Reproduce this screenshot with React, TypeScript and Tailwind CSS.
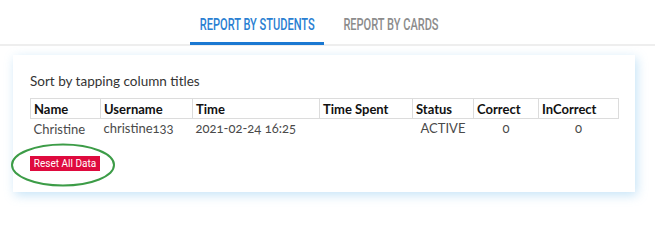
import React from 'react';

interface Row {
    name: string;
    username: string;
    time: string;
    spent: string;
    status: string;
    correct: number;
    incorrect: number;
}

const rows: Row[] = [
    { name: 'Christine', username: 'christine133', time: '2021-02-24 16:25', spent: '', status: 'ACTIVE', correct: 0, incorrect: 0 },
];

const columns = [
    { label: 'Name', width: 'w-[70px]' },
    { label: 'Username', width: 'w-[92px]' },
    { label: 'Time', width: 'w-[127px]' },
    { label: 'Time Spent', width: 'w-[93px]' },
    { label: 'Status', width: 'w-[61px]' },
    { label: 'Correct', width: 'w-[65px]' },
    { label: 'InCorrect', width: 'w-[80px]' },
];

const Tab: React.FC<{ label: string; active?: boolean; width: string }> = ({ label, active, width }) => (
    <button
        className={`-mb-px flex h-[45px] ${width} justify-center pt-[15px] ${active ? 'border-b-[3px] border-[#1a78d2]' : 'border-b-[3px] border-transparent'}`}
    >
        <span
            className={`inline-block shrink-0 scale-x-[0.69] whitespace-nowrap font-['Roboto',sans-serif] text-[16px] font-medium leading-5 ${active ? 'text-[#2a80d2]' : 'text-[#8c8c8c]'}`}
        >
            {label}
        </span>
    </button>
);

export default function App() {
    return (
        <div className="relative h-[214px] w-[655px] overflow-hidden bg-white font-['Lato',sans-serif]">
            <div className="flex h-[46px] items-end justify-center gap-[9px] border-b-2 border-[#eeeeee] pr-[17px]">
                <Tab label="REPORT BY STUDENTS" active width="w-[134px]" />
                <Tab label="REPORT BY CARDS" width="w-[115px]" />
            </div>

            <div className="ml-[13px] mt-[9px] w-[622px] bg-white px-[17px] pb-[21px] pt-4 shadow-[2px_3px_10px_rgba(110,185,235,0.4)]">
                <p className="text-[13.5px] leading-5 text-[#333]">Sort by tapping column titles</p>

                <table className="mt-[7px] w-[588px] table-fixed oldstyle-nums">
                    <thead>
                        <tr>
                            {columns.map((c) => (
                                <th
                                    key={c.label}
                                    className={`${c.width} h-5 border border-[#dcdcdc] px-[3px] py-0 text-left text-[13px] font-bold leading-[18px] text-[#111]`}
                                >
                                    {c.label}
                                </th>
                            ))}
                        </tr>
                    </thead>
                    <tbody>
                        {rows.map((r) => (
                            <tr key={r.username} className="text-[13px] text-[#4a4a4a]">
                                <td className="h-5 px-[3px] leading-5">{r.name}</td>
                                <td className="px-[3px]">{r.username}</td>
                                <td className="px-[3px]">{r.time}</td>
                                <td className="px-[3px]">{r.spent}</td>
                                <td className="px-[3px] text-center">{r.status}</td>
                                <td className="px-[3px] text-center">{r.correct}</td>
                                <td className="px-[3px] text-center">{r.incorrect}</td>
                            </tr>
                        ))}
                    </tbody>
                </table>

                <button className="mt-[17px] flex h-[15px] w-[70px] items-center justify-center bg-[#df0a3e] font-['Roboto',sans-serif] text-[10px] leading-none text-white">
                    Reset All Data
                </button>
            </div>

            {/* annotation ring around the reset button */}
            <svg className="absolute left-[10px] top-[143px]" width="106" height="44" viewBox="0 0 106 44">
                <ellipse cx="53" cy="22" rx="51" ry="20.5" fill="none" stroke="#3c9c47" strokeWidth="2" />
            </svg>
        </div>
    );
}
